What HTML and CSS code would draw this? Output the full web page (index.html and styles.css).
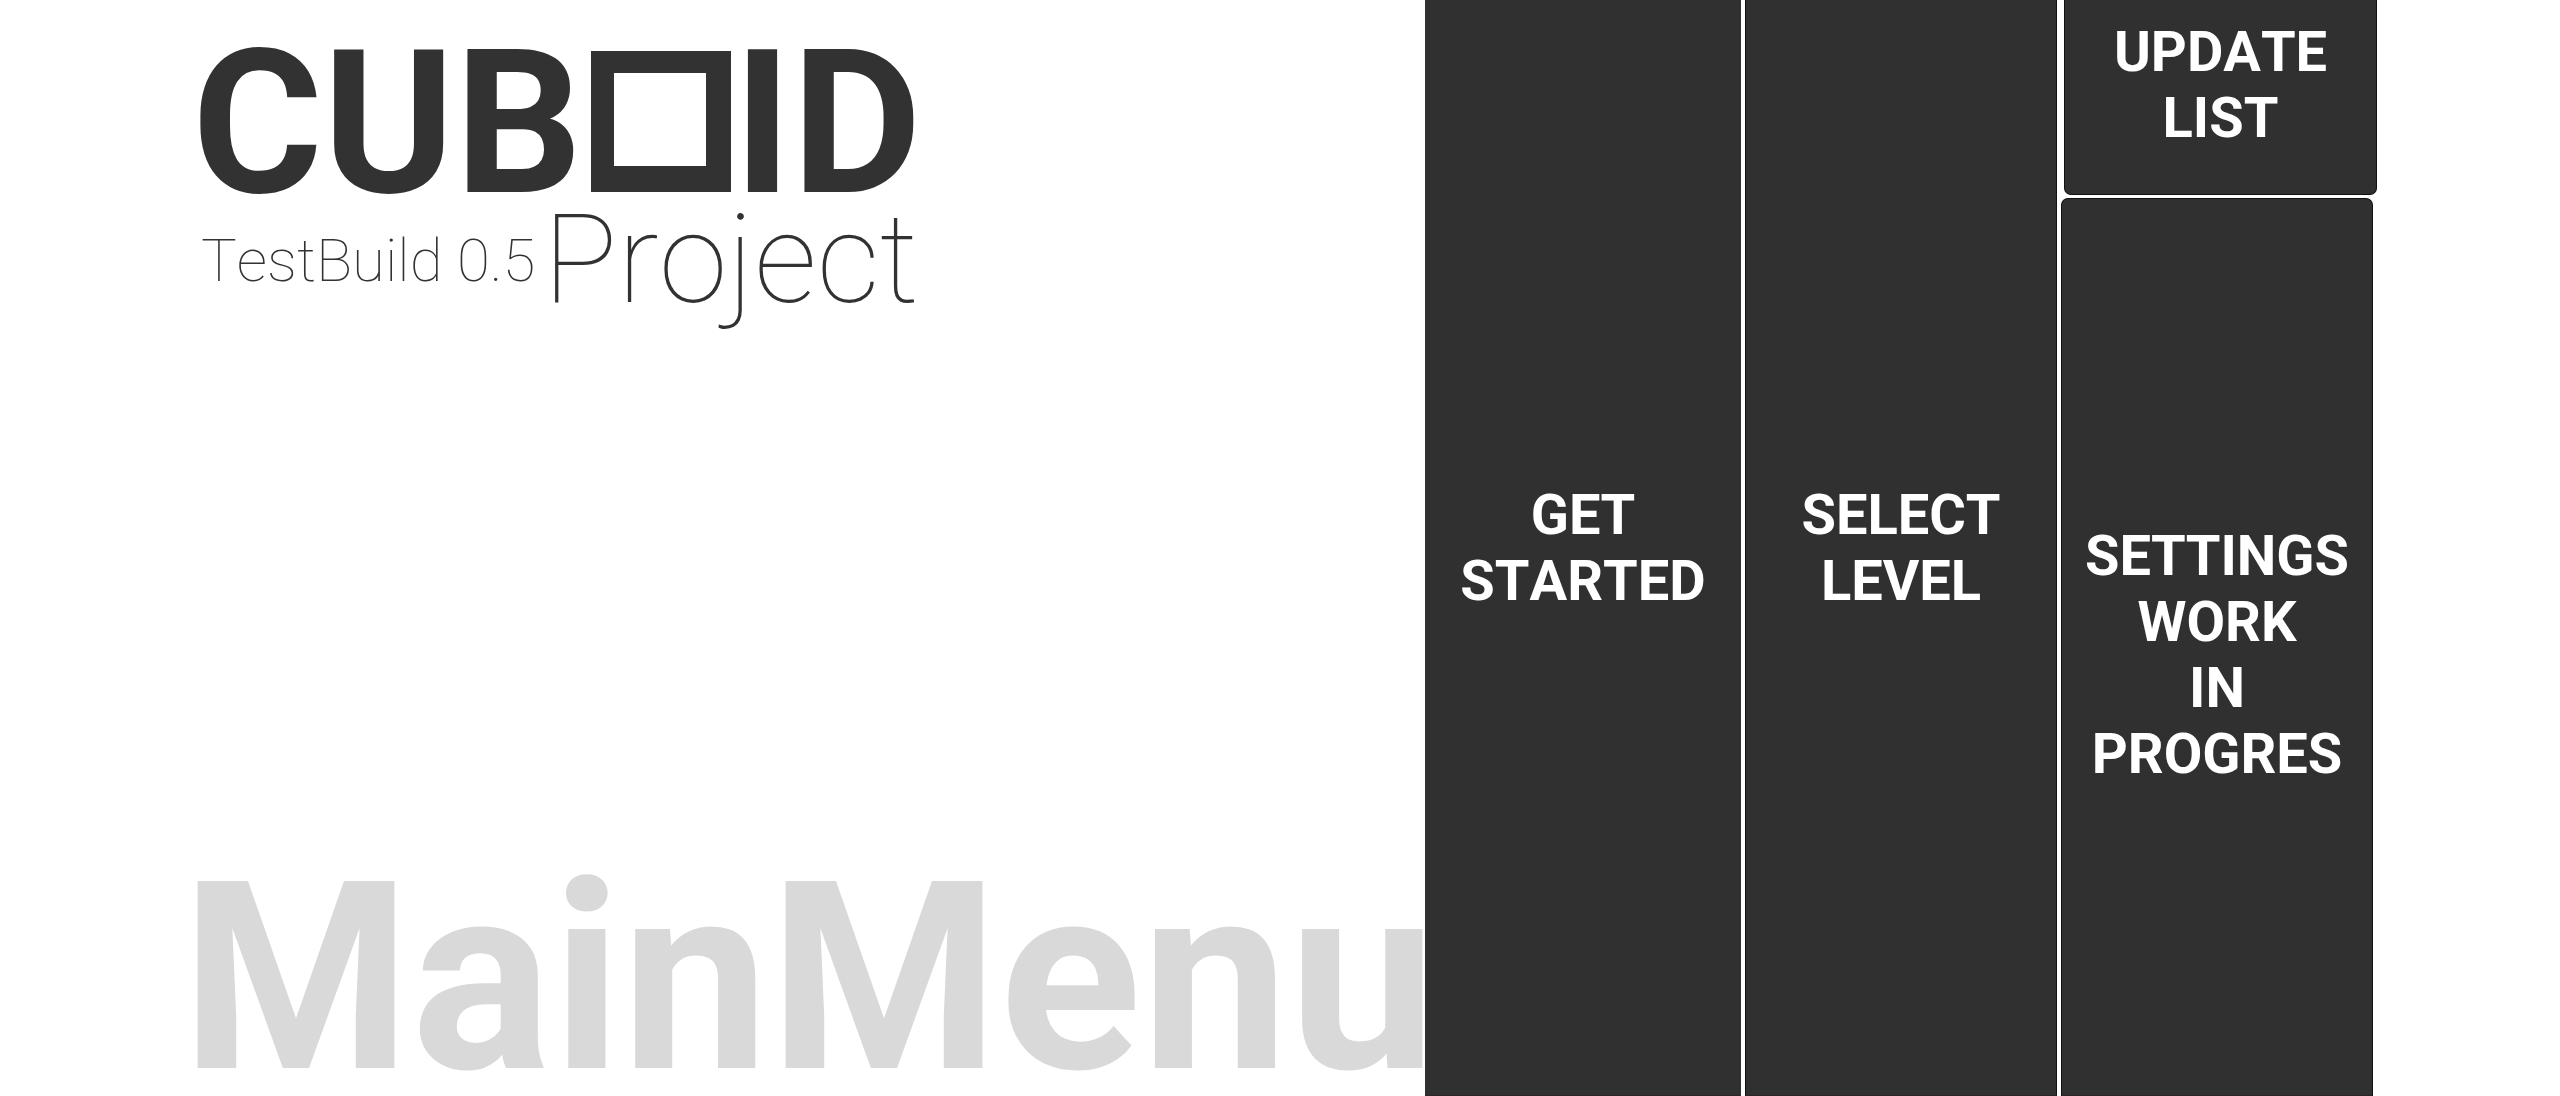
FILE: index.html
```html
<!DOCTYPE html>
<html lang="en">
<head>
    <meta charset="UTF-8">
    <meta name="viewport" content="width=device-width, initial-scale=1.0">
    <title>Cuboid Project</title>
    <link rel="stylesheet" href="styles.css">
</head>
<body>
    <main class="screen">
        <section class="intro">
            <header class="logo">
                <h1 class="logo-title">CUB<span class="cube"></span>ID</h1>
                <p class="logo-sub"><span class="build">TestBuild 0.5</span><span class="project">Project</span></p>
            </header>
            <h2 class="page-name">MainMenu</h2>
        </section>

        <nav class="menu">
            <button class="menu-btn start">GET<br>STARTED</button>
            <button class="menu-btn level">SELECT<br>LEVEL</button>
            <div class="menu-column">
                <button class="menu-btn update">UPDATE<br>LIST</button>
                <button class="menu-btn settings">SETTINGS<br>WORK<br>IN<br>PROGRES</button>
            </div>
        </nav>
    </main>
</body>
</html>
```
FILE: styles.css
```css
* {
    box-sizing: border-box;
}
body {
    margin: 0;
    background-color: #fff;
    color: #323232;
    font-family: Roboto, sans-serif;
    font-kerning: none;
}
.screen {
    display: flex;
    height: 100vh;
    padding: 0 183px 0 181px;
    overflow: hidden;
}
.intro {
    flex: 1;
    min-width: 0;
    display: flex;
    flex-direction: column;
    justify-content: space-between;
    align-items: flex-start;
}
/* Logo */
.logo {
    padding: 24px 0 0 11px;
}
.logo-title {
    display: flex;
    align-items: baseline;
    margin: 0;
    font-size: 200px;
    font-weight: bold;
    line-height: 200px;
}
.cube {
    width: 140px;
    height: 141px;
    margin: 0 2px 2px 9px;
    border: solid #323232;
    border-width: 22px 25px 26px 23px;
}
.logo-sub {
    display: flex;
    justify-content: space-between;
    margin: 0;
    padding: 0 3px 0 9px;
    font-weight: 100;
    line-height: 72px;
}
.build {
    font-size: 60px;
    line-height: 74px;
}
.project {
    font-size: 124px;
}
.page-name {
    margin: 0;
    font-size: 263px;
    font-weight: bold;
    line-height: 236px;
    color: #d9d9d9;
}
/* Menu */
.menu {
    flex: none;
    display: flex;
    gap: 4px;
}
.menu-btn {
    width: 312px;
    padding: 0;
    border: 1px solid #111;
    border-top: none;
    border-bottom-color: #2e2529;
    background-color: #303030;
    color: white;
    font-family: inherit;
    font-size: 56px;
    font-weight: bold;
    font-kerning: none;
    line-height: 66px;
    cursor: pointer;
}
.menu-btn:hover {
    background-color: #444;
}
.start {
    width: 316px;
    border-left-color: #303030;
    border-right-color: #303030;
}
.menu-column {
    display: flex;
    flex-direction: column;
    gap: 3px;
    width: 316px;
}
.update {
    flex: none;
    width: 313px;
    height: 195px;
    margin-left: 3px;
    padding-bottom: 24px;
    border-bottom-color: #111;
    border-radius: 0 0 7px 7px;
}
.settings {
    flex: 1;
    padding-top: 15px;
    border-top: 1px solid #111;
    border-radius: 7px 7px 0 0;
}
```
